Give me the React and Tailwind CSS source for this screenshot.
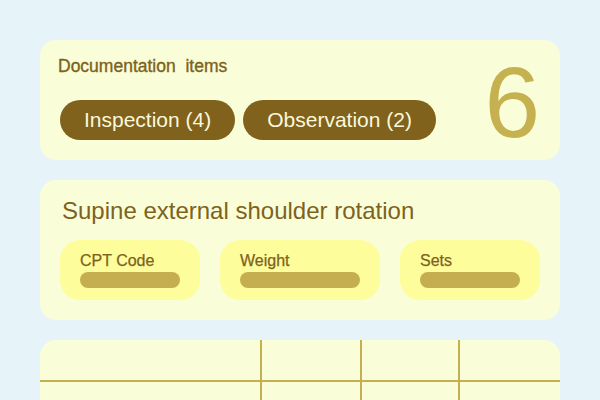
export default function App() {
  const fields = [
    { label: "CPT Code", w: "w-[140px]", bar: "w-[100px]" },
    { label: "Weight", w: "w-[160px]", bar: "w-[120px]" },
    { label: "Sets", w: "w-[140px]", bar: "w-[100px]" },
  ];

  return (
    <div className="w-[600px] h-[400px] overflow-hidden bg-[#e6f4fa] px-10 pt-10 flex flex-col gap-5 font-['Liberation_Sans',Arial,sans-serif] text-[#7d6220]">
      {/* Summary */}
      <div className="shrink-0 h-[120px] rounded-2xl bg-[#fafed8] pl-[18px] pr-5 flex justify-between">
        <div className="pt-[14px]">
          <div className="text-[17.5px] leading-6 whitespace-pre [-webkit-text-stroke:0.35px]">Documentation  items</div>
          <div className="flex gap-2 mt-[22px] ml-[2px]">
            <span className="h-10 px-6 rounded-full bg-[#80621d] text-[#fbf8dc] text-[21px] flex items-center">Inspection (4)</span>
            <span className="h-10 px-6 rounded-full bg-[#80621d] text-[#fbf8dc] text-[21px] flex items-center">Observation (2)</span>
          </div>
        </div>
        <div className="text-[100px] leading-none text-[#c5b150] pt-[12px]">6</div>
      </div>

      {/* Exercise */}
      <div className="shrink-0 h-[140px] rounded-2xl bg-[#fafed8] px-5 pt-[16px]">
        <div className="text-[24px] leading-[30px] ml-[2px]">Supine external shoulder rotation</div>
        <div className="flex gap-5 mt-[14px]">
          {fields.map((f) => (
            <div key={f.label} className={`${f.w} h-[60px] rounded-[20px] bg-[#fdfd9c] px-5 pt-[11px]`}>
              <div className="text-[16px] leading-5 [-webkit-text-stroke:0.25px]">{f.label}</div>
              <div className={`${f.bar} h-4 rounded-full bg-[#c4ae50] mt-[1px]`} />
            </div>
          ))}
        </div>
      </div>

      {/* Table */}
      <div className="shrink-0 h-[80px] rounded-t-2xl bg-[#fafed8] grid grid-cols-[222px_100px_98px_1fr] grid-rows-[42px_1fr] overflow-hidden">
        <div className="border-r-2 border-b-2 border-[#c4b050]" />
        <div className="border-r-2 border-b-2 border-[#c4b050]" />
        <div className="border-r-2 border-b-2 border-[#c4b050]" />
        <div className="border-b-2 border-[#c4b050]" />
        <div className="border-r-2 border-[#c4b050]" />
        <div className="border-r-2 border-[#c4b050]" />
        <div className="border-r-2 border-[#c4b050]" />
        <div />
      </div>
    </div>
  );
}
